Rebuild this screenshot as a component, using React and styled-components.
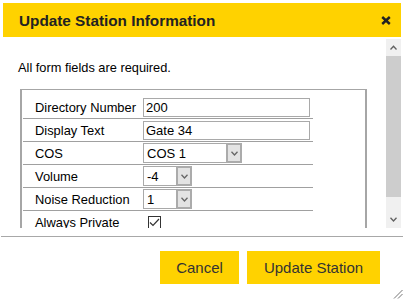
import React from "react";
import styled, { createGlobalStyle } from "styled-components";

const GlobalStyle = createGlobalStyle`
  html, body {
    margin: 0;
    padding: 0;
    background: #ffffff;
  }
  body {
    font-family: "Liberation Sans", Arial, sans-serif;
    color: #000;
  }
`;

const YELLOW = "#ffd200";

const Dialog = styled.div`
  position: relative;
  width: 404px;
  height: 299px;
  box-sizing: border-box;
  padding: 3px 3px 0 3px;
  display: flex;
  flex-direction: column;
  background: #fff;
  overflow: hidden;
`;

const TitleBar = styled.div`
  height: 34px;
  flex: none;
  background: ${YELLOW};
  display: flex;
  align-items: center;
  justify-content: space-between;
  padding: 1px 10px 0 16px;
  box-sizing: border-box;
`;

const Title = styled.span`
  font-size: 15.3px;
  font-weight: bold;
  color: #222;
`;

const CloseButton = styled.span`
  display: flex;
  width: 10px;
  height: 10px;
  align-items: center;
  justify-content: center;
  cursor: pointer;
`;

const Body = styled.div`
  height: 191px;
  flex: none;
  display: flex;
`;

const ScrollArea = styled.div`
  flex: 1;
  overflow: hidden;
  padding: 24px 0 0 15px;
`;

const Note = styled.p`
  margin: 0;
  font-size: 12.8px;
  line-height: 14px;
`;

const FieldBox = styled.div`
  margin: 14px 0 0 2px;
  width: 347px;
  box-sizing: border-box;
  border: 2px solid #a6a6a6;
  border-top-width: 1px;
  padding: 6px 0 0 1px;
`;

const Table = styled.div`
  width: 290px;
  display: flex;
  flex-direction: column;
`;

const Row = styled.div`
  height: 23px;
  box-sizing: border-box;
  display: flex;
  align-items: center;
  border-bottom: 1px solid #a0a0a0;
`;

const Label = styled.span`
  width: 108px;
  flex: none;
  padding-left: 12px;
  font-size: 12.9px;
`;

const TextInput = styled.input`
  width: 167px;
  height: 19px;
  box-sizing: border-box;
  border: 1px solid #a9a9a9;
  padding: 0 2px;
  font-family: "Liberation Sans", Arial, sans-serif;
  font-size: 13px;
  color: #000;
  outline: none;
`;

const SelectBox = styled.div`
  width: ${(p) => p.$width}px;
  height: 20px;
  box-sizing: border-box;
  border: 1px solid #a9a9a9;
  display: flex;
  align-items: stretch;
  background: #fff;
`;

const SelectValue = styled.span`
  flex: 1;
  display: flex;
  align-items: center;
  padding-left: 3px;
  font-size: 13px;
`;

const ArrowBox = styled.span`
  width: 16px;
  flex: none;
  box-sizing: border-box;
  border: 2px solid #ababab;
  margin: -1px -1px -1px 0;
  background: #e3e3e3;
  display: flex;
  align-items: center;
  justify-content: center;
`;

const CheckBox = styled.span`
  width: 13px;
  height: 13px;
  box-sizing: border-box;
  margin-left: 5px;
  border: 1px solid #333;
  background: #fff;
  display: flex;
  align-items: center;
  justify-content: center;
`;

const ScrollBar = styled.div`
  width: 15px;
  flex: none;
  margin-top: 2px;
  background: #f0f0f0;
  display: flex;
  flex-direction: column;
`;

const ScrollButton = styled.div`
  height: 17px;
  flex: none;
  display: flex;
  align-items: center;
  justify-content: center;
`;

const Thumb = styled.div`
  height: 141px;
  flex: none;
  background: #cdcdcd;
`;

const Track = styled.div`
  flex: 1;
`;

const Divider = styled.div`
  margin: 8px -2px 0;
  border-top: 1px solid #a8a8a8;
  flex: none;
`;

const Footer = styled.div`
  display: flex;
  justify-content: flex-end;
  gap: 8px;
  padding: 14px 21px 0 0;
`;

const Button = styled.button`
  width: ${(p) => p.$width}px;
  height: 33px;
  padding: 0;
  border: none;
  background: ${YELLOW};
  color: #333;
  font-family: "Liberation Sans", Arial, sans-serif;
  font-size: 15px;
  cursor: pointer;
`;

const Grip = styled.svg`
  position: absolute;
  right: 1px;
  bottom: 0;
`;

const Chevron = ({ up, color = "#555" }) => (
  <svg width="7" height="5" viewBox="0 0 7 5">
    <path
      d={up ? "M0.5 4.5 L3.5 1.2 L6.5 4.5" : "M0.5 0.8 L3.5 4 L6.5 0.8"}
      fill="none"
      stroke={color}
      strokeWidth="1.3"
    />
  </svg>
);

const Select = ({ value, width }) => (
  <SelectBox $width={width}>
    <SelectValue>{value}</SelectValue>
    <ArrowBox>
      <Chevron color="#666" />
    </ArrowBox>
  </SelectBox>
);

const fields = [
  { label: "Directory Number", kind: "input", value: "200" },
  { label: "Display Text", kind: "input", value: "Gate 34" },
  { label: "COS", kind: "select", value: "COS 1", width: 99 },
  { label: "Volume", kind: "select", value: "-4", width: 49 },
  { label: "Noise Reduction", kind: "select", value: "1", width: 49 },
  { label: "Always Private", kind: "check" },
];

export default function App() {
  return (
    <>
      <GlobalStyle />
      <Dialog>
        <TitleBar>
          <Title>Update Station Information</Title>
          <CloseButton>
            <svg width="10" height="9" viewBox="0 0 10 9">
              <path d="M1.2 1 L8.8 8 M8.8 1 L1.2 8" stroke="#222" strokeWidth="2.4" />
            </svg>
          </CloseButton>
        </TitleBar>
        <Body>
          <ScrollArea>
            <Note>All form fields are required.</Note>
            <FieldBox>
              <Table>
                {fields.map((f) => (
                  <Row key={f.label}>
                    <Label>{f.label}</Label>
                    {f.kind === "input" && <TextInput defaultValue={f.value} readOnly />}
                    {f.kind === "select" && <Select value={f.value} width={f.width} />}
                    {f.kind === "check" && (
                      <CheckBox>
                        <svg width="11" height="9" viewBox="0 0 11 9">
                          <path d="M1 4.5 L4 7.5 L10 1" fill="none" stroke="#333" strokeWidth="1.2" />
                        </svg>
                      </CheckBox>
                    )}
                  </Row>
                ))}
              </Table>
            </FieldBox>
          </ScrollArea>
          <ScrollBar>
            <ScrollButton>
              <Chevron up color="#606060" />
            </ScrollButton>
            <Thumb />
            <Track />
            <ScrollButton>
              <Chevron color="#606060" />
            </ScrollButton>
          </ScrollBar>
        </Body>
        <Divider />
        <Footer>
          <Button $width={79}>Cancel</Button>
          <Button $width={133}>Update Station</Button>
        </Footer>
        <Grip width="10" height="10" viewBox="0 0 10 10">
          <path d="M9.5 1 L1 9.5 M9.5 5 L5 9.5" stroke="#777" strokeWidth="1" />
        </Grip>
      </Dialog>
    </>
  );
}
